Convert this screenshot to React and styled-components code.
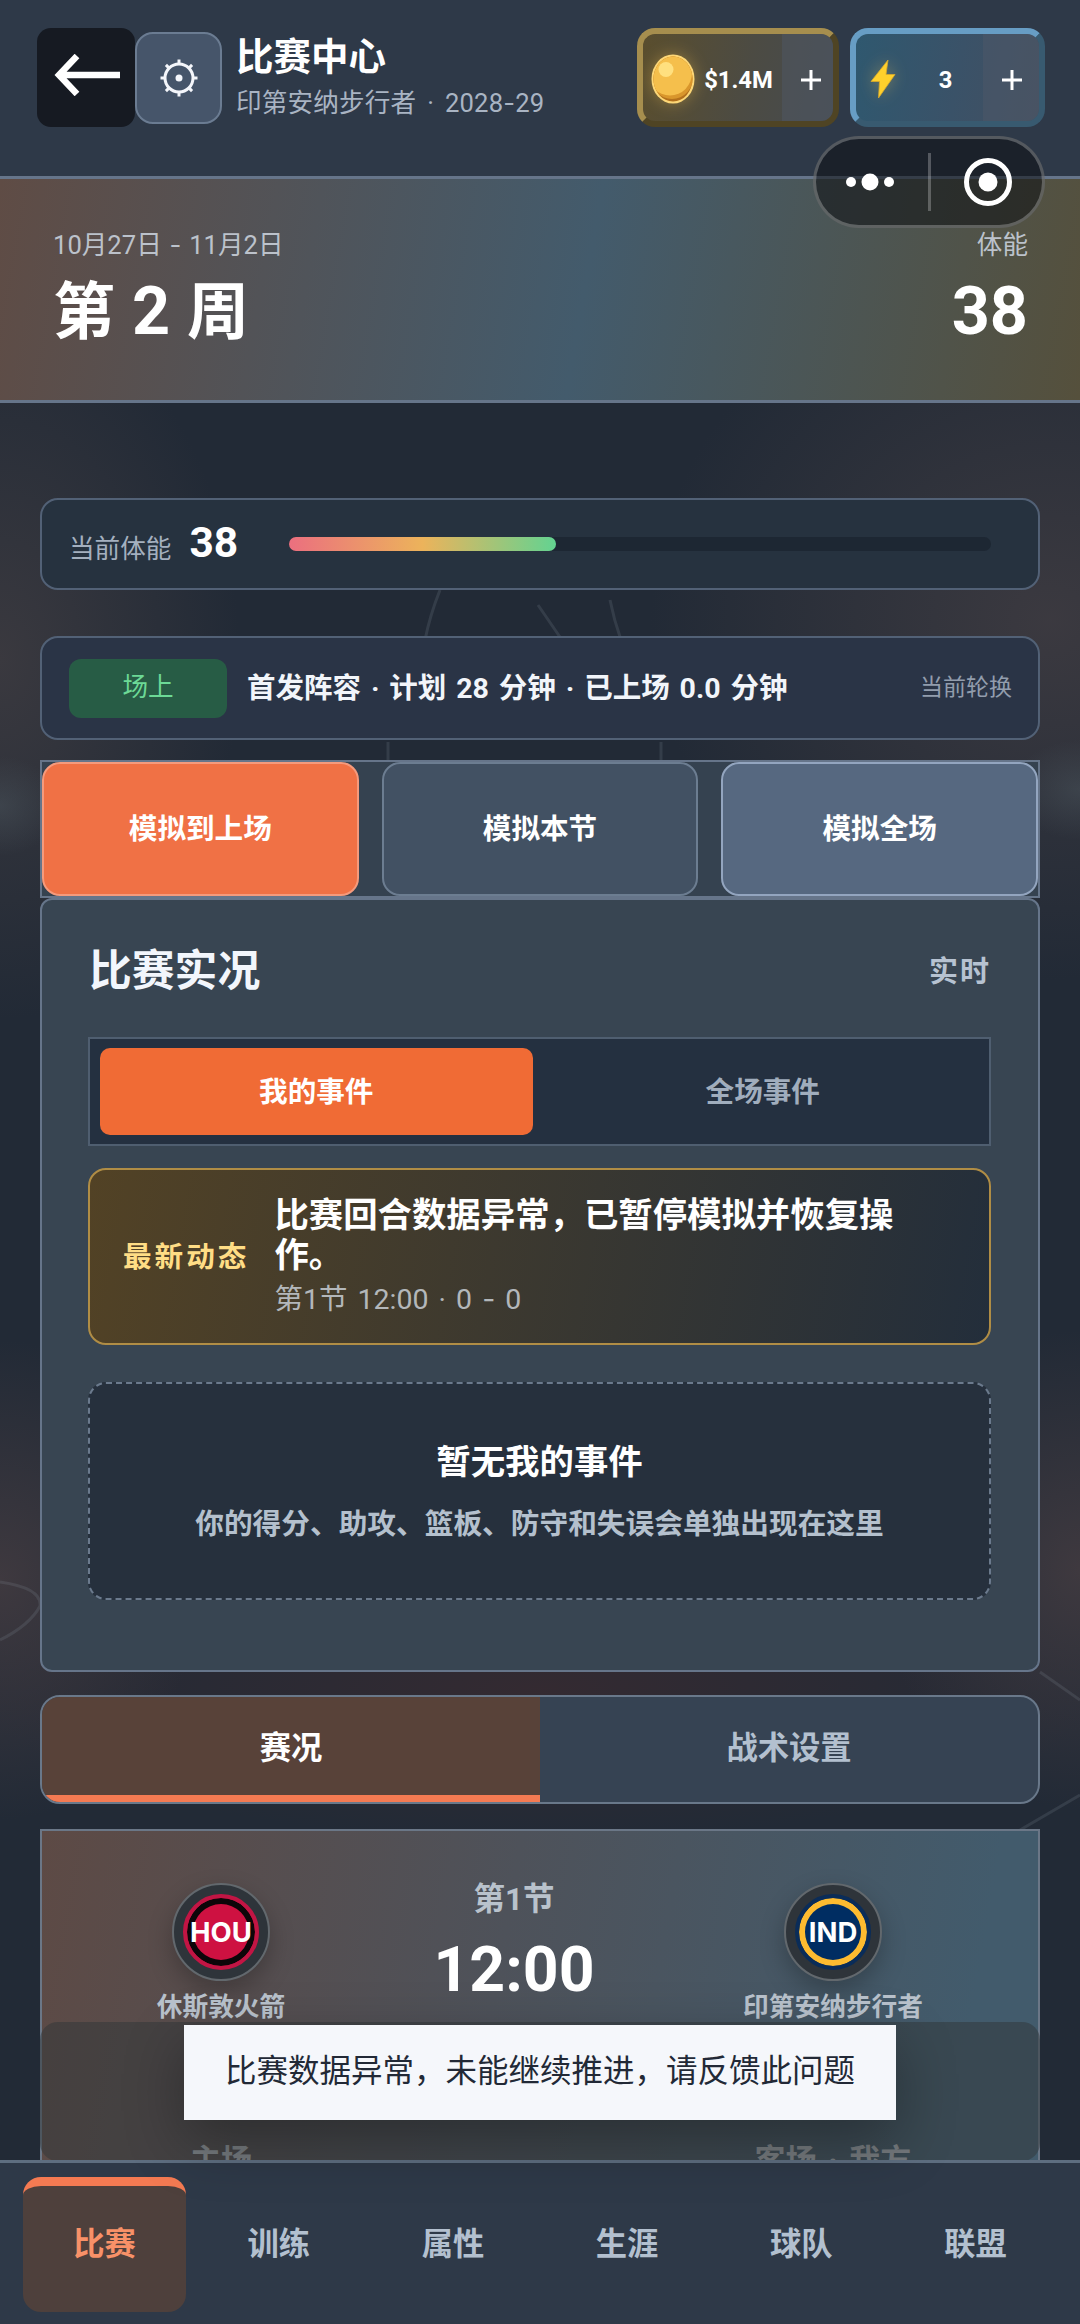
import React from "react";
import styled, { createGlobalStyle } from "styled-components";

const GlobalStyle = createGlobalStyle`
  * { box-sizing: border-box; }
  body {
    margin: 0;
    background: #222a36;
    font-family: Roboto, "Noto Sans CJK SC", sans-serif;
    color: #fff;
  }
  p, h1, h2 { margin: 0; }
  button { font-family: inherit; color: inherit; padding: 0; }
`;

const navItems = ["比赛", "训练", "属性", "生涯", "球队", "联盟"];

const simActions = [
  { label: "模拟到上场", bg: "#f07145", line: "#f59a7c" },
  { label: "模拟本节", bg: "#425163", line: "#6c7d91" },
  { label: "模拟全场", bg: "#566880", line: "#93a5bf" },
];

const GearIcon = () => (
  <svg width="38" height="38" viewBox="0 0 38 38" fill="none" stroke="#f4f6fb">
    <circle cx="19" cy="19" r="14" strokeWidth="3" />
    <circle cx="19" cy="19" r="3.5" fill="#f4f6fb" stroke="none" />
    {[0, 45, 90, 135, 180, 225, 270, 315].map((deg) => (
      <path key={deg} d="M19 5V0.5" strokeWidth="3" transform={`rotate(${deg} 19 19)`} />
    ))}
  </svg>
);

const CoinIcon = () => (
  <svg width="44" height="52" viewBox="0 0 44 52">
    <defs>
      <clipPath id="coinClip">
        <ellipse cx="22" cy="26" rx="19.5" ry="22.5" />
      </clipPath>
    </defs>
    <ellipse cx="22" cy="26" rx="21.5" ry="24.5" fill="#fdd777" />
    <g clipPath="url(#coinClip)">
      <rect width="44" height="52" fill="#b3701c" />
      <ellipse cx="21" cy="22" rx="22" ry="24" fill="#d9962c" />
      <ellipse cx="19" cy="20" rx="22" ry="22.5" fill="#f5bf4c" />
    </g>
    <circle cx="15" cy="16.5" r="7.5" fill="#ffe07f" />
  </svg>
);

const BoltIcon = () => (
  <svg width="26" height="40" viewBox="0 0 26 40">
    <path d="M18 1L1 22.5h8.500L8.500 39L25 15.500H16z" fill="#ffd02c" stroke="#d9a92b" strokeWidth="0.8" />
  </svg>
);

const PlusIcon = () => (
  <svg width="20" height="20" viewBox="0 0 20 20" stroke="#fff" strokeWidth="3">
    <path d="M10 0V20M0 10H20" />
  </svg>
);

const Court = () => (
  <CourtLines viewBox="0 0 1080 2324" fill="none" stroke="#8a94a3" strokeOpacity="0.18" strokeWidth="3">
    <path d="M440 590Q430 615 425 640M388 742V762M661 742V762M538 605L562 640M610 600Q614 620 621 640" />
    <path d="M0 1582Q42 1588 40 1606Q30 1625 0 1640M1040 1672L1080 1700M1020 1830L1080 1795" />
  </CourtLines>
);

export default function App() {
  return (
    <Page>
      <GlobalStyle />
      <Court />

      <Header>
        <BackButton>
          <svg width="68" height="42" viewBox="0 0 68 42" fill="none" stroke="#fff" strokeWidth="6.5">
            <path d="M68 21H7M25 2L7 21L25 40" />
          </svg>
        </BackButton>
        <GearButton>
          <GearIcon />
        </GearButton>
        <Heading>
          <Title>比赛中心</Title>
          <SubTitle>
            印第安纳步行者 · 2028<Dash>-</Dash>29
          </SubTitle>
        </Heading>
        <Wallet $kind="coin">
          <WalletIcon $left={8}>
            <CoinIcon />
          </WalletIcon>
          <WalletValue>$1.4M</WalletValue>
          <Plus $width={51} $shift={6}>
            <PlusIcon />
          </Plus>
        </Wallet>
        <Wallet $kind="energy">
          <WalletIcon $left={14}>
            <BoltIcon />
          </WalletIcon>
          <WalletValue>3</WalletValue>
          <Plus $width={56} $shift={2}>
            <PlusIcon />
          </Plus>
        </Wallet>
      </Header>

      <Capsule>
        <svg width="48" height="18" viewBox="0 0 48 18" fill="#fff">
          <circle cx="5" cy="9" r="5" />
          <circle cx="24" cy="9" r="8.5" />
          <circle cx="43" cy="9" r="5" />
        </svg>
        <CapsuleLine />
        <svg width="48" height="48" viewBox="0 0 48 48">
          <circle cx="24" cy="24" r="21.5" fill="none" stroke="#fff" strokeWidth="5" />
          <circle cx="24" cy="24" r="9.5" fill="#fff" />
        </svg>
      </Capsule>

      <WeekBanner>
        <div>
          <BannerLabel>
            10月27日 <Dash>-</Dash> 11月2日
          </BannerLabel>
          <BannerValue>
            第 <BigNumber>2</BigNumber> 周
          </BannerValue>
        </div>
        <BannerRight>
          <BannerLabel>体能</BannerLabel>
          <BannerValue>
            <BigNumber>38</BigNumber>
          </BannerValue>
        </BannerRight>
      </WeekBanner>

      <Content>
        <StaminaCard>
          <StaminaLabel>当前体能</StaminaLabel>
          <StaminaValue>38</StaminaValue>
          <Track>
            <Fill style={{ width: "38%" }} />
          </Track>
        </StaminaCard>

        <LineupCard>
          <Tag>场上</Tag>
          <LineupText>首发阵容 · 计划 28 分钟 · 已上场 0.0 分钟</LineupText>
          <LineupNote>当前轮换</LineupNote>
        </LineupCard>

        <SimRow>
          {simActions.map((action) => (
            <SimButton key={action.label} $bg={action.bg} $line={action.line}>
              {action.label}
            </SimButton>
          ))}
        </SimRow>

        <LivePanel>
          <PanelHead>
            <PanelTitle>比赛实况</PanelTitle>
            <PanelFlag>实时</PanelFlag>
          </PanelHead>
          <Switch>
            <SwitchItem $active>我的事件</SwitchItem>
            <SwitchItem>全场事件</SwitchItem>
          </Switch>
          <Notice>
            <NoticeLabel>最新动态</NoticeLabel>
            <div>
              <NoticeText>比赛回合数据异常，已暂停模拟并恢复操作。</NoticeText>
              <NoticeMeta>
                第1节 12:00 · 0 <Dash>-</Dash> 0
              </NoticeMeta>
            </div>
          </Notice>
          <Empty>
            <EmptyTitle>暂无我的事件</EmptyTitle>
            <EmptyText>你的得分、助攻、篮板、防守和失误会单独出现在这里</EmptyText>
          </Empty>
        </LivePanel>

        <Tabs>
          <Tab $active>赛况</Tab>
          <Tab>战术设置</Tab>
        </Tabs>

        <MatchCard>
          <Team>
            <Badge>
              <Logo $base="#ce1141" $ring="#0d0609" $edge="#c21544">HOU</Logo>
            </Badge>
            <TeamName>休斯敦火箭</TeamName>
            <TeamSide>主场</TeamSide>
          </Team>
          <Clock>
            <Quarter>第1节</Quarter>
            <Time>12:00</Time>
          </Clock>
          <Team>
            <Badge>
              <Logo $base="#002d62" $ring="#fdbb30" $edge="#0a2c58">IND</Logo>
            </Badge>
            <TeamName>印第安纳步行者</TeamName>
            <TeamSide>客场 · 我方</TeamSide>
          </Team>
          <Shade />
        </MatchCard>
      </Content>

      <Toast>比赛数据异常，未能继续推进，请反馈此问题</Toast>

      <BottomNav>
        {navItems.map((item, index) => (
          <NavItem key={item} $active={index === 0}>
            {item}
          </NavItem>
        ))}
      </BottomNav>
    </Page>
  );
}

const Page = styled.div`
  position: relative;
  isolation: isolate;
  display: flex;
  flex-direction: column;
  width: 1080px;
  height: 2324px;
  overflow: hidden;
  background:
    radial-gradient(ellipse 60px 50px at 0 806px, rgba(80, 92, 100, 0.4), transparent),
    radial-gradient(ellipse 70px 50px at 1080px 790px, rgba(80, 92, 100, 0.4), transparent),
    radial-gradient(ellipse 240px 360px at 0 660px, rgba(66, 62, 66, 0.75), transparent),
    radial-gradient(ellipse 400px 360px at 1050px 620px, rgba(70, 64, 68, 0.7), transparent),
    radial-gradient(ellipse 200px 240px at 0 1580px, rgba(72, 62, 66, 0.75), transparent),
    radial-gradient(ellipse 200px 240px at 1080px 1570px, rgba(72, 62, 66, 0.75), transparent),
    radial-gradient(ellipse 560px 150px at 540px 1690px, rgba(56, 42, 48, 0.8), transparent),
    #222a36;
`;

const CourtLines = styled.svg`
  position: absolute;
  z-index: -1;
  inset: 0;
`;

const Dash = styled.span`
  font-family: Inter, sans-serif;
`;

const Header = styled.header`
  display: flex;
  align-items: flex-start;
  height: 179px;
  padding: 28px 35px 0 37px;
  background: #2e3948;
  border-bottom: 3px solid #66758a;
`;

const BackButton = styled.button`
  display: flex;
  align-items: center;
  justify-content: center;
  width: 98px;
  height: 99px;
  padding-bottom: 6px;
  border: none;
  border-radius: 14px;
  background: #161a22;
`;

const GearButton = styled.button`
  display: flex;
  align-items: center;
  justify-content: center;
  width: 87px;
  height: 92px;
  margin-top: 4px;
  border: 2px solid #6b7c92;
  border-radius: 18px;
  background: #46556a;
`;

const Heading = styled.div`
  flex: 1;
  padding: 5px 0 0 14px;
`;

const Title = styled.h1`
  font-size: 37.5px;
  line-height: 48px;
  font-weight: 700;
`;

const SubTitle = styled.p`
  margin-top: 3px;
  font-size: 25.6px;
  line-height: 38px;
  letter-spacing: 0.15px;
  word-spacing: 4.5px;
  color: #a9b4c3;
  white-space: nowrap;
`;

const Wallet = styled.div`
  display: flex;
  width: ${({ $kind }) => ($kind === "coin" ? 202 : 195)}px;
  height: 99px;
  margin-left: ${({ $kind }) => ($kind === "coin" ? 0 : 11)}px;
  border: 6px solid;
  border-color: ${({ $kind }) =>
    $kind === "coin" ? "#a68e4e #4f4424 #4f4424 #a68e4e" : "#679dc4 #385a70 #385a70 #679dc4"};
  border-radius: 18px;
  overflow: hidden;
  background: ${({ $kind }) =>
    $kind === "coin"
      ? "linear-gradient(100deg, #5a4e2e, #4c4b43 55%, #464b4f)"
      : "linear-gradient(100deg, #2f586f, #3a5268 55%, #434f60)"};
`;

const WalletIcon = styled.div`
  display: flex;
  align-items: center;
  width: 52px;
  padding: 3px 0 0 ${({ $left }) => $left}px;
  height: 100%;

  svg {
    flex: none;
    filter: drop-shadow(0 0 8px rgba(255, 200, 80, 0.35));
  }
`;

const WalletValue = styled.div`
  flex: 1;
  display: flex;
  align-items: center;
  justify-content: center;
  padding-top: 4px;
  font-size: 23.8px;
  font-weight: 700;
`;

const Plus = styled.div`
  display: flex;
  align-items: center;
  justify-content: center;
  width: ${({ $width }) => $width}px;
  padding: 4px 0 0 ${({ $shift }) => $shift}px;
  background: rgba(80, 88, 104, 0.45);
`;

const Capsule = styled.div`
  position: absolute;
  z-index: 3;
  top: 136px;
  left: 813px;
  display: flex;
  align-items: center;
  justify-content: space-between;
  width: 232px;
  height: 92px;
  padding: 0 30px;
  border: 3px solid rgba(255, 255, 255, 0.25);
  border-radius: 46px;
  background: rgba(12, 14, 18, 0.55);
`;

const CapsuleLine = styled.span`
  width: 3px;
  height: 58px;
  background: rgba(255, 255, 255, 0.25);
`;

const WeekBanner = styled.section`
  display: flex;
  justify-content: space-between;
  height: 224px;
  padding: 46px 52px 0 53px;
  border-bottom: 3px solid #66758a;
  background: linear-gradient(100deg, #5f4c45 0%, #435b6c 54%, #55503c 100%);
`;

const BannerLabel = styled.p`
  font-size: 25.6px;
  line-height: 40px;
  word-spacing: 1.5px;
  color: #bcc2cb;
`;

const BannerValue = styled.p`
  margin-top: 4px;
  font-size: 62px;
  line-height: 88px;
  font-weight: 700;
  word-spacing: 1.5px;
`;

const BigNumber = styled.span`
  font-size: 66.5px;
  line-height: 1;
`;

const BannerRight = styled.div`
  text-align: right;
`;

const Content = styled.main`
  display: flex;
  flex-direction: column;
  padding: 95px 40px 0;
`;

const Card = styled.section`
  display: flex;
  align-items: center;
  border: 2px solid #526176;
  border-radius: 18px;
`;

const StaminaCard = styled(Card)`
  height: 92px;
  padding: 0 47px 0 27px;
  background: #26323f;
`;

const StaminaLabel = styled.span`
  padding-top: 5px;
  font-size: 25.6px;
  color: #a4b0bf;
`;

const StaminaValue = styled.span`
  width: 100px;
  margin-left: 18px;
  font-size: 42.5px;
  line-height: 60px;
  padding-bottom: 2px;
  font-weight: 700;
`;

const Track = styled.div`
  flex: 1;
  height: 14px;
  border-radius: 7px;
  background: #1d2733;
`;

const Fill = styled.div`
  height: 100%;
  border-radius: 7px;
  background: linear-gradient(90deg, #eb6f7f, #ecb35b 50%, #63d391);
`;

const LineupCard = styled(Card)`
  height: 104px;
  margin-top: 46px;
  padding: 0 26px 0 27px;
  background: #2a3446;
`;

const Tag = styled.span`
  width: 158px;
  height: 59px;
  line-height: 57px;
  border-radius: 12px;
  text-align: center;
  font-size: 25.6px;
  color: #6cd996;
  background: #275c45;
`;

const LineupText = styled.span`
  flex: 1;
  margin-left: 20px;
  padding-bottom: 6px;
  font-size: 28.5px;
  font-weight: 700;
  word-spacing: 2.8px;
  color: #f2f5fa;
`;

const LineupNote = styled.span`
  padding-bottom: 7px;
  font-size: 23px;
  color: #929dad;
`;

const SimRow = styled.div`
  display: grid;
  grid-template-columns: repeat(3, 1fr);
  gap: 23px;
  height: 138px;
  margin-top: 20px;
  border: 2px solid #66758a;
  background: #354250;
`;

const SimButton = styled.button`
  border: 2px solid ${({ $line }) => $line};
  border-radius: 18px;
  background: ${({ $bg }) => $bg};
  font-size: 28.6px;
  font-weight: 700;
  padding-bottom: 5px;
`;

const LivePanel = styled.section`
  height: 774px;
  padding: 39px 47px 0 46px;
  border: 2px solid #66758a;
  border-radius: 12px;
  background: #384552;
`;

const PanelHead = styled.div`
  display: flex;
  align-items: center;
  justify-content: space-between;
  height: 60px;
`;

const PanelTitle = styled.h2`
  padding: 3px 0 0 1px;
  font-size: 42.8px;
  line-height: 60px;
  color: #f2f6fc;
`;

const PanelFlag = styled.span`
  font-size: 29px;
  font-weight: 700;
  letter-spacing: 2px;
  color: #b6c2d1;
`;

const Switch = styled.div`
  display: grid;
  grid-template-columns: 1fr 1fr;
  gap: 14px;
  height: 109px;
  margin-top: 38px;
  padding: 9px 10px;
  border: 2px solid #4f5e70;
  background: #243040;
`;

const SwitchItem = styled.button`
  border: none;
  border-radius: 10px;
  background: ${({ $active }) => ($active ? "#f06b35" : "transparent")};
  color: ${({ $active }) => ($active ? "#fff" : "#a0adbd")};
  font-size: 28.6px;
  font-weight: 700;
  padding-bottom: 5px;
`;

const Notice = styled.div`
  display: flex;
  align-items: center;
  gap: 25px;
  height: 177px;
  margin-top: 22px;
  padding: 0 27px 0 33px;
  border: 2px solid #b08d45;
  border-radius: 18px;
  background: linear-gradient(100deg, #524225, #232e3b);
`;

const NoticeLabel = styled.span`
  flex: none;
  padding-bottom: 4px;
  font-size: 28.6px;
  font-weight: 700;
  letter-spacing: 3px;
  color: #ffdd85;
`;

const NoticeText = styled.p`
  padding-top: 2px;
  font-size: 34.4px;
  line-height: 40px;
  font-weight: 700;
`;

const NoticeMeta = styled.p`
  margin-top: 4px;
  font-size: 28.5px;
  line-height: 40px;
  word-spacing: 3px;
  color: #b3b7ba;
`;

const Empty = styled.div`
  height: 218px;
  margin-top: 37px;
  padding-top: 52px;
  border: 2px dashed #6b7a8d;
  border-radius: 18px;
  background: #26303d;
  text-align: center;
`;

const EmptyTitle = styled.p`
  font-size: 34.4px;
  line-height: 52px;
  font-weight: 700;
`;

const EmptyText = styled.p`
  margin-top: 14px;
  font-size: 28.7px;
  line-height: 44px;
  font-weight: 700;
  color: #b4c0cd;
`;

const Tabs = styled.div`
  display: flex;
  height: 109px;
  margin-top: 23px;
  border: 2px solid #69788a;
  border-radius: 20px;
  overflow: hidden;
  background: #364353;
`;

const Tab = styled.button`
  flex: 1;
  border: none;
  border-bottom: 7px solid ${({ $active }) => ($active ? "#f47a52" : "transparent")};
  background: ${({ $active }) => ($active ? "#584239" : "transparent")};
  color: ${({ $active }) => ($active ? "#fff" : "#b3c0cf")};
  font-size: 31.3px;
  font-weight: 700;
  padding-bottom: 1px;
`;

const MatchCard = styled.section`
  position: relative;
  display: grid;
  grid-template-columns: 358px 1fr 410px;
  height: 420px;
  margin-top: 25px;
  padding-top: 52px;
  border: 2px solid #6b7787;
  background: linear-gradient(100deg, #5d4a45, #4e525a 45%, #425b6c 90%);
`;

const Team = styled.div`
  display: flex;
  flex-direction: column;
  align-items: center;
`;

const Badge = styled.div`
  display: flex;
  align-items: center;
  justify-content: center;
  width: 98px;
  height: 98px;
  border: 2px solid #62686d;
  border-radius: 50%;
  background: #2e343a;
  box-shadow: 0 10px 24px rgba(0, 0, 0, 0.25);
`;

const Logo = styled.div`
  display: flex;
  align-items: center;
  justify-content: center;
  width: 76px;
  height: 76px;
  border: 4px solid ${({ $edge }) => $edge};
  border-radius: 50%;
  background: ${({ $base }) => $base};
  box-shadow: inset 0 0 0 6px ${({ $ring }) => $ring};
  font-family: Inter, sans-serif;
  font-size: 27.5px;
  font-weight: 700;
`;

const TeamName = styled.p`
  margin-top: 7px;
  font-size: 25.7px;
  line-height: 38px;
  font-weight: 700;
  color: #b9c2cc;
  white-space: nowrap;
`;

const TeamSide = styled.p`
  margin-top: 113px;
  font-size: 31px;
  line-height: 44px;
  font-weight: 700;
  word-spacing: 4px;
  color: #b6bbc0;
`;

const Clock = styled.div`
  text-align: center;
`;

const Quarter = styled.p`
  margin-top: -5px;
  font-size: 31.5px;
  line-height: 44px;
  font-weight: 700;
  color: #b9c2cc;
`;

const Time = styled.p`
  margin-top: 3px;
  font-size: 62.5px;
  line-height: 90px;
  font-weight: 700;
`;

const Shade = styled.div`
  position: absolute;
  top: 191px;
  left: -2px;
  width: 1000px;
  height: 139px;
  border-radius: 18px;
  background: rgba(48, 54, 56, 0.5);
`;

const Toast = styled.div`
  position: absolute;
  z-index: 2;
  top: 2025px;
  left: 184px;
  width: 712px;
  height: 95px;
  line-height: 94px;
  text-align: center;
  font-size: 31.5px;
  color: #222936;
  background: #f5f7fb;
  box-shadow: 0 20px 60px rgba(0, 0, 0, 0.32);
  white-space: nowrap;
`;

const BottomNav = styled.nav`
  position: absolute;
  z-index: 1;
  bottom: 0;
  left: 0;
  display: flex;
  gap: 11px;
  width: 100%;
  height: 164px;
  padding: 14px 23px 12px;
  border-top: 3px solid #5e6e80;
  background: #2e3948;
`;

const NavItem = styled.button`
  flex: 1;
  border: none;
  border-top: 9px solid ${({ $active }) => ($active ? "#f47a52" : "transparent")};
  border-radius: 18px;
  background: ${({ $active }) => ($active ? "#4e403c" : "transparent")};
  color: ${({ $active }) => ($active ? "#f89168" : "#b3c0cf")};
  font-size: 31.3px;
  font-weight: 700;
  padding-bottom: 16px;
`;
